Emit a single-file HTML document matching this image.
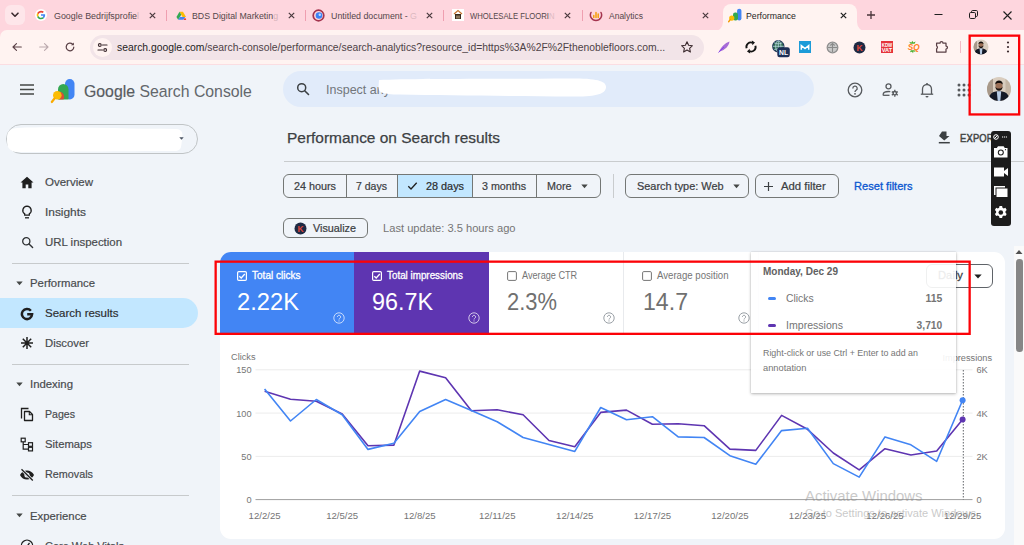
<!DOCTYPE html>
<html lang="en">
<head>
<meta charset="utf-8">
<title>Performance</title>
<style>
*{box-sizing:border-box;margin:0;padding:0}
html,body{width:1024px;height:545px;overflow:hidden;background:#f0f4f9;font-family:"Liberation Sans",Arial,sans-serif;color:#1f1f1f}
.abs,.t{position:absolute}
.t{white-space:nowrap;line-height:1;transform:translateY(-50%) scaleX(var(--sx,1));transform-origin:left center}
.r{transform-origin:right center}
#root{position:relative;width:1024px;height:545px;overflow:hidden}
/* browser chrome */
#tabs{left:0;top:0;width:1024px;height:42px;background:#fed6de}
#tool{left:0;top:30px;width:1024px;height:34.400px;background:#fff3f1;border-top-left-radius:7px}
#atab{left:723px;top:4.400px;width:134px;height:27.600px;background:#fff3f1;border-radius:8px 8px 0 0}
.tt{font-size:9.700px;color:#54464a}
.sep{width:1px;height:11px;top:10px;background:#ef9fb0}
#url{left:90px;top:35px;width:614px;height:25px;border-radius:13px;background:#f2e4e8}
/* header */
.nav,.grp{font-size:11.200px;color:#474a4d;-webkit-text-stroke:.18px #474a4d;margin-top:.9px}
.hr{height:1px;background:#c7cacc}
.btn{border:1px solid #747775;border-radius:6px;height:24px;top:174px}
.bt{font-size:11px;color:#3c4043;-webkit-text-stroke:.22px #3c4043}
.ml{font-size:10px;-webkit-text-stroke:.3px}
.mv{font-size:24.5px}
.ax{font-size:9.200px;fill:#757575;font-family:"Liberation Sans",sans-serif}
</style>
</head>
<body>
<div id="root">
<!-- TABSTRIP -->
<div id="tabs" class="abs"></div>
<div id="tool" class="abs"></div>
<div id="atab" class="abs"></div>
<svg class="abs" style="left:713px;top:22px" width="10" height="10"><path d="M10 10H0A10 10 0 0 0 10 0Z" fill="#fff3f1"/></svg>
<svg class="abs" style="left:857px;top:22px" width="10" height="10"><path d="M0 10H10A10 10 0 0 1 0 0Z" fill="#fff3f1"/></svg>
<!-- chevron btn -->
<div class="abs" style="left:5px;top:5px;width:20px;height:20px;border-radius:6px;background:#fee6ea"></div>
<svg class="abs" style="left:10px;top:11px" width="10" height="8"><path d="M2 2.2 5 5.2 8 2.2" fill="none" stroke="#3b2a2e" stroke-width="1.6" stroke-linecap="round" stroke-linejoin="round"/></svg>
<!-- tab1 -->
<svg class="abs" style="left:35px;top:9px" width="12" height="12" viewBox="0 0 48 48"><circle cx="24" cy="24" r="24" fill="#fff"/><path fill="#EA4335" d="M24 13.5c3.2 0 5.4 1.4 6.600 2.500l4.900-4.800C32.500 8.400 28.600 6.800 24 6.800 17.300 6.800 11.500 10.600 8.700 16.200l5.700 4.400C15.800 16.500 19.600 13.500 24 13.500z"/><path fill="#4285F4" d="M40.500 24.400c0-1.400-.1-2.400-.4-3.500H24v6.400h9.400c-.2 1.600-1.200 4-3.500 5.600l5.500 4.200c3.200-3 5.100-7.400 5.100-12.700z"/><path fill="#FBBC05" d="M14.400 27.400c-.4-1.100-.6-2.200-.6-3.400s.2-2.300.6-3.400l-5.700-4.400C7.500 18.600 6.800 21.200 6.800 24s.7 5.400 1.900 7.800l5.700-4.400z"/><path fill="#34A853" d="M24 41.200c4.600 0 8.500-1.500 11.400-4.100l-5.500-4.200c-1.500 1-3.400 1.700-5.900 1.700-4.400 0-8.200-3-9.600-7.100l-5.700 4.400c2.800 5.600 8.600 9.300 15.300 9.300z"/></svg>
<div class="t tt" id="tb1" style="--sx:0.918;left:54px;top:15.5px">Google Bedrijfsprofie<span style="opacity:.25">l</span></div>
<svg class="abs cx" style="left:148px;top:11px" width="9" height="9"><path d="M1.800 1.800 7.200 7.200M7.200 1.800 1.800 7.200" stroke="#4a3a3e" stroke-width="1.200"/></svg>
<div class="abs sep" style="left:166px"></div>
<!-- tab2 -->
<svg class="abs" style="left:176px;top:10.500px" width="10.500" height="9.600" viewBox="0 0 12 11"><path d="M4 1h4l3.500 6h-4z" fill="#fbbc04"/><path d="M4 1 .5 7l2 3L6 4.400z" fill="#34a853"/><path d="M2.500 10h6l2-3h-6z" fill="#4285f4"/><circle cx="10.300" cy="9.600" r="1.300" fill="#ea4335"/></svg>
<div class="t tt" id="tb2" style="--sx:0.908;left:192px;top:15.700px">BDS Digital Marketin<span style="opacity:.25">g</span></div>
<svg class="abs cx" style="left:287px;top:11px" width="9" height="9"><path d="M1.800 1.800 7.200 7.200M7.200 1.800 1.800 7.200" stroke="#4a3a3e" stroke-width="1.200"/></svg>
<div class="abs sep" style="left:305px"></div>
<!-- tab3 -->
<svg class="abs" style="left:312px;top:9px" width="13" height="13" viewBox="0 0 13 13"><circle cx="6.500" cy="6.500" r="5.300" fill="none" stroke="#a4344e" stroke-width="1.700"/><circle cx="7" cy="6.500" r="3.300" fill="#3b82f6"/><circle cx="7.800" cy="5.800" r="1.200" fill="#bfdbfe"/></svg>
<div class="t tt" id="tb3" style="--sx:0.912;left:331px;top:15.700px">Untitled document - <span style="opacity:.2">G</span></div>
<svg class="abs cx" style="left:425px;top:11px" width="9" height="9"><path d="M1.800 1.800 7.200 7.200M7.200 1.800 1.800 7.200" stroke="#4a3a3e" stroke-width="1.200"/></svg>
<div class="abs sep" style="left:443px"></div>
<!-- tab4 -->
<div class="abs" style="left:452px;top:9px;width:12px;height:12px;background:#fff"></div>
<svg class="abs" style="left:452px;top:9px" width="12" height="12" viewBox="0 0 12 12"><path d="M2 5 6 1.500 10 5" fill="none" stroke="#c87533" stroke-width="1.300"/><path d="M3 5h6v5H3z" fill="#3a2a1c"/><path d="M5 6.500v3M7 6.500v3" stroke="#f3d6b0" stroke-width=".9"/></svg>
<div class="t tt" id="tb4" style="--sx:0.797;left:470px;top:15.700px">WHOLESALE FLOORI<span style="opacity:.2">N</span></div>
<svg class="abs cx" style="left:563px;top:11px" width="9" height="9"><path d="M1.800 1.800 7.200 7.200M7.200 1.800 1.800 7.200" stroke="#4a3a3e" stroke-width="1.200"/></svg>
<div class="abs sep" style="left:582px"></div>
<!-- tab5 -->
<svg class="abs" style="left:589px;top:9px" width="14" height="13" viewBox="0 0 14 13"><path d="M2 3.500A5.600 5.600 0 1 0 12 3.500" fill="none" stroke="#a4344e" stroke-width="1.500" stroke-linecap="round"/><path d="M4.800 8.500V6.500M7 8.500V3.500M9.200 8.500V5" stroke="#f59e0b" stroke-width="1.500" stroke-linecap="round"/></svg>
<div class="t tt" id="tb5" style="--sx:0.877;left:609px;top:15.700px">Analytics</div>
<svg class="abs cx" style="left:701px;top:11px" width="9" height="9"><path d="M1.800 1.800 7.200 7.200M7.200 1.800 1.800 7.200" stroke="#4a3a3e" stroke-width="1.200"/></svg>
<!-- active tab -->
<svg class="abs" style="left:728px;top:7.500px" width="15" height="15" viewBox="0 0 24 24"><rect x="14.500" y="1" width="7" height="19" rx="3.500" fill="#4285f4"/><rect x="8" y="7" width="8" height="13" rx="3.500" fill="#34a853"/><path d="M8 20h6V9.500A6 6 0 0 0 8 14z" fill="#ea4335" opacity=".0"/><circle cx="6" cy="16" r="4.200" fill="#fbbc04"/><path d="M3.500 18.500 1 22" stroke="#f29900" stroke-width="2.200" stroke-linecap="round"/></svg>
<div class="t tt" id="tb6" style="--sx:0.901;left:746px;top:15.700px;color:#1f1f1f">Performance</div>
<svg class="abs cx" style="left:839px;top:11px" width="9" height="9"><path d="M1.800 1.800 7.200 7.200M7.200 1.800 1.800 7.200" stroke="#1f1f1f" stroke-width="1.200"/></svg>
<svg class="abs" style="left:866px;top:10px" width="10" height="10"><path d="M5 1v8M1 5h8" stroke="#4a353a" stroke-width="1.300"/></svg>
<!-- window ctl -->
<svg class="abs" style="left:933px;top:9px" width="12" height="12"><path d="M1.500 5.500h8" stroke="#1f1f1f" stroke-width="1"/></svg>
<svg class="abs" style="left:968px;top:9px" width="12" height="12"><rect x="1.500" y="3.500" width="6" height="6" rx="1.200" fill="none" stroke="#1f1f1f" stroke-width="1"/><path d="M3.500 3.500V2.700A1.200 1.200 0 0 1 4.700 1.500H8.300A1.200 1.200 0 0 1 9.500 2.700V6.300A1.200 1.200 0 0 1 8.300 7.500H7.500" fill="none" stroke="#1f1f1f" stroke-width="1"/></svg>
<svg class="abs" style="left:1001px;top:9px" width="13" height="13"><path d="M2.500 2.500 10.500 10.500M10.500 2.500 2.500 10.500" stroke="#1f1f1f" stroke-width="1.100"/></svg>
<!-- TOOLBAR -->
<svg class="abs" style="left:10.500px;top:41px" width="12" height="12"><path d="M10.300 6H2.200M5.500 2.600 2 6 5.500 9.400" fill="none" stroke="#5a4046" stroke-width="1.150" stroke-linecap="round" stroke-linejoin="round"/></svg>
<svg class="abs" style="left:37.500px;top:41px" width="12" height="12"><path d="M1.700 6H9.800M6.500 2.600 10 6 6.500 9.400" fill="none" stroke="#bba9ad" stroke-width="1.150" stroke-linecap="round" stroke-linejoin="round"/></svg>
<svg class="abs" style="left:64px;top:41px" width="12" height="12"><path d="M9.800 6A3.800 3.800 0 1 1 8.600 3.200" fill="none" stroke="#5a4046" stroke-width="1.200" stroke-linecap="round"/><path d="M9.900 1.500v2.800H7.100z" fill="#5a4046"/></svg>
<div id="url" class="abs"></div>
<div class="abs" style="left:93px;top:38px;width:19px;height:19px;border-radius:10px;background:#fff3f1"></div>
<svg class="abs" style="left:97px;top:42px" width="11" height="11"><circle cx="2.800" cy="3" r="1.400" fill="none" stroke="#3b2a2e" stroke-width="1.100"/><path d="M5.500 3h4.500" stroke="#3b2a2e" stroke-width="1.200" stroke-linecap="round"/><circle cx="8.200" cy="8" r="1.400" fill="none" stroke="#3b2a2e" stroke-width="1.100"/><path d="M1 8h4.500" stroke="#3b2a2e" stroke-width="1.200" stroke-linecap="round"/></svg>
<div class="t" id="urlt" style="--sx:0.959;left:117px;top:47px;font-size:10.800px;color:#1f1f1f">search.google.com<span style="color:#4d4246">/search-console/performance/search-analytics?resource_id=https%3A%2F%2Fthenoblefloors.com...</span></div>
<svg class="abs" style="left:680px;top:40px" width="14" height="14" viewBox="0 0 14 14"><path d="M7 1.800 8.600 5.300 12.400 5.700 9.600 8.300 10.400 12 7 10.100 3.600 12 4.400 8.300 1.600 5.700 5.400 5.300Z" fill="none" stroke="#3b2a2e" stroke-width="1.100" stroke-linejoin="round"/></svg>
<!-- ext icons -->
<svg class="abs" style="left:717px;top:40px" width="14" height="14"><path d="M1.500 12.500C4 7 8 3 12.500 1.500 12 6 8 10 3 11.500Z" fill="#a66bd6"/><path d="M1.500 12.500 7 7" stroke="#7c3aed" stroke-width=".8"/></svg>
<svg class="abs" style="left:744px;top:40px" width="14" height="14"><path d="M2.600 8.300A4.500 4.500 0 0 1 8.600 2.800" fill="none" stroke="#141414" stroke-width="1.900"/><path d="M11.400 5.700A4.500 4.500 0 0 1 5.400 11.200" fill="none" stroke="#141414" stroke-width="1.900"/><path d="M7.800 .600 11 2.600 8.400 5.200z" fill="#141414"/><path d="M6.200 13.400 3 11.400 5.600 8.800z" fill="#141414"/></svg>
<svg class="abs" style="left:771px;top:39px" width="20" height="20"><circle cx="7.300" cy="7.300" r="5.600" fill="#2f6b4f" stroke="#1f3557" stroke-width="1.200"/><path d="M1.700 7.300h11.200M7.300 1.700v11.200M3.200 3.800c2.600 1.400 5.600 1.400 8.200 0M3.200 10.800c2.600-1.400 5.600-1.400 8.200 0" stroke="#c9e2f0" stroke-width=".7" fill="none"/><ellipse cx="7.300" cy="7.300" rx="2.600" ry="5.600" fill="none" stroke="#c9e2f0" stroke-width=".7"/><rect x="6.300" y="8.200" width="12.500" height="10" rx="2.300" fill="#1d2f57"/><text x="12.550" y="16" font-size="6.800" font-weight="bold" fill="#fff" text-anchor="middle" font-family="Liberation Sans,sans-serif">NL</text></svg>
<div class="abs" style="left:799px;top:41px;width:12px;height:12px;background:#1d9bd8"></div>
<svg class="abs" style="left:799px;top:41px" width="12" height="12"><path d="M2.300 8.800V4.500L6 7.500 9.700 4.500V8.800" fill="none" stroke="#fff" stroke-width="1.500"/></svg>
<svg class="abs" style="left:826px;top:41px" width="13" height="13"><circle cx="6.500" cy="6.500" r="5.300" fill="#c9c9c9" stroke="#8f8f8f" stroke-width="1.300"/><path d="M6.500 2v9M4.300 4.500 6.500 2.500 8.700 4.500M2 6.500h9" stroke="#8a8a8a" stroke-width="1.100" fill="none"/></svg>
<svg class="abs" style="left:853px;top:41px" width="13" height="13"><circle cx="6.500" cy="6.500" r="6" fill="#1e2a44"/><text x="6.500" y="9.600" font-size="8.500" font-weight="bold" fill="#e0473b" text-anchor="middle" font-family="Liberation Sans,sans-serif">K</text></svg>
<div class="abs" style="left:880.500px;top:41px;width:12.500px;height:12px;background:#e5333b"></div>
<svg class="abs" style="left:881px;top:41px" width="12" height="12"><text x="6" y="5.600" font-size="5.400" font-weight="bold" fill="#fff" text-anchor="middle" textLength="10.500" lengthAdjust="spacingAndGlyphs" font-family="Liberation Sans,sans-serif">KDW</text><text x="6" y="10.800" font-size="5.400" font-weight="bold" fill="#fff" text-anchor="middle" textLength="10.500" lengthAdjust="spacingAndGlyphs" font-family="Liberation Sans,sans-serif">VAT</text></svg>
<svg class="abs" style="left:905px;top:40px" width="17" height="14"><path d="M5.500 3.800 4.200 1.800 6.500 2.500 7.300 .8 8.300 2.600 10.600 1.500 9.600 3.800z" fill="#4caf2f"/><path d="M5.800 10.300 5 12.300 7 11.700 8 13.200 8.600 11.300 10.500 12 9.500 10.200z" fill="#4caf2f"/><text x="8.700" y="10" font-size="8.200" font-weight="bold" font-style="italic" fill="#ff7d1a" text-anchor="middle" font-family="Liberation Sans,sans-serif">SQ</text></svg>
<svg class="abs" style="left:934px;top:39px" width="16" height="16" viewBox="0 0 16 16"><path d="M2.600 4.200h3.400a1.500 1.500 0 0 1 3 0H12v2.900a1.450 1.450 0 0 1 0 2.900v3H2.600v-3.300a1.500 1.500 0 0 0 0-2.700z" fill="none" stroke="#5a4046" stroke-width="1.250" stroke-linejoin="round"/></svg>
<div class="abs" style="left:960px;top:41px;width:1px;height:12px;background:#f3b9c4"></div>
<svg class="abs" style="left:973px;top:39px" width="16" height="16"><defs><clipPath id="av1"><circle cx="8" cy="8" r="7.500"/></clipPath></defs><g clip-path="url(#av1)"><rect width="16" height="16" fill="#d9cdbf"/><rect width="4" height="16" fill="#a8998a"/><ellipse cx="8" cy="5.800" rx="2.300" ry="2.900" fill="#9b6f56"/><path d="M5.500 5.300c-.2-3.700 5.200-3.700 5 0-.6-1.500-4.400-1.500-5 0z" fill="#120d0b"/><path d="M5.600 6.100c.2 1.200 1.100 1.700 2.400 1.700s2.200-.5 2.400-1.700c.4 4.200-5.200 4.200-4.800 0z" fill="#1a1310"/><path d="M1 16c0-5 3-6.500 7-6.500s7 1.500 7 6.500z" fill="#141926"/><path d="M6.600 9.600h2.800L8.800 16H7.200z" fill="#b7cbe4"/></g></svg>
<svg class="abs" style="left:1005px;top:40px" width="6" height="14"><circle cx="3" cy="2.500" r="1.100" fill="#3b2a2e"/><circle cx="3" cy="7" r="1.100" fill="#3b2a2e"/><circle cx="3" cy="11.500" r="1.100" fill="#3b2a2e"/></svg>
<div class="abs" style="left:0;top:63.600px;width:1024px;height:.8px;background:#fbdde2"></div>
<!-- PAGE -->
<svg class="abs" style="left:20px;top:84px" width="14" height="11"><path d="M0 1h14M0 5.500h14M0 10h14" stroke="#444746" stroke-width="1.400"/></svg>
<svg class="abs" style="left:50px;top:77px" width="27" height="27" viewBox="0 0 27 27"><rect x="15" y="2" width="9.500" height="20.500" rx="4.700" fill="#4285f4"/><path d="M8 22.500h10.500V12.200a5.250 5.250 0 0 0-10.500 0z" fill="#34a853"/><path d="M9 22.500h4.500a5.500 5.500 0 0 0-4.500-8z" fill="#ea4335" opacity=".9"/><circle cx="7.300" cy="18.300" r="4.300" fill="#fbbc04"/><path d="M4.500 21.500 1.800 25" stroke="#f9ab00" stroke-width="2.200" stroke-linecap="round"/></svg>
<div class="t" id="gsc" style="--sx:0.920;left:84px;top:92px;font-size:17.200px;color:#63676c"><span style="color:#585c61;-webkit-text-stroke:.2px #585c61">Google</span> Search Console</div>
<div class="abs" style="left:283px;top:71px;width:531px;height:36px;border-radius:18px;background:#e1ebfa"></div>
<svg class="abs" style="left:296px;top:82px" width="14" height="14"><circle cx="5.700" cy="5.700" r="4" fill="none" stroke="#3c4043" stroke-width="1.500"/><path d="M8.700 8.700 12.500 12.500" stroke="#3c4043" stroke-width="1.600" stroke-linecap="round"/></svg>
<div class="t" id="insp" style="left:326px;top:89.500px;font-size:12.500px;color:#72767b">Inspect any URL</div>
<svg class="abs" style="left:370px;top:74px" width="245" height="28"><path d="M9 6C40 4.500 120 5 200 4.500 230 4 236.500 8 236 13.500 235.500 20 226 23 200 22.500 150 22 80 21.500 30 20.500 11 20.500 8.500 18 8.500 13Z" fill="#fff"/></svg>
<!-- header icons -->
<svg class="abs" style="left:846.500px;top:81.500px" width="16" height="16"><circle cx="8" cy="8" r="6.800" fill="none" stroke="#575a5e" stroke-width="1.300"/><path d="M5.800 6.400a2.200 2.200 0 1 1 3.300 1.900c-.8.500-1.100.9-1.100 1.700" fill="none" stroke="#575a5e" stroke-width="1.300"/><circle cx="8" cy="11.800" r=".9" fill="#575a5e"/></svg>
<svg class="abs" style="left:881.500px;top:81.500px" width="18" height="16"><circle cx="6.500" cy="4.300" r="2.500" fill="none" stroke="#575a5e" stroke-width="1.300"/><path d="M1.200 13.500v-1c0-2 2.800-3 5.300-3 .6 0 1.200.1 1.800.2" fill="none" stroke="#575a5e" stroke-width="1.300"/><path d="M1.200 13.300h6.300" stroke="#575a5e" stroke-width="1.300"/><circle cx="12.800" cy="11.300" r="1.700" fill="none" stroke="#575a5e" stroke-width="1.500"/><path d="M12.800 7.800v1.500M12.800 13.300v1.500M9.800 9.600l1.300.8M14.500 12.300l1.300.8M9.800 13.100l1.300-.8M14.500 10.400l1.300-.8" stroke="#575a5e" stroke-width="1.300"/></svg>
<svg class="abs" style="left:918.500px;top:80.500px" width="16" height="18"><path d="M3.500 13V8a4.500 4.500 0 0 1 9 0v5" fill="none" stroke="#575a5e" stroke-width="1.300"/><path d="M1.800 13.200h12.400" stroke="#575a5e" stroke-width="1.300"/><path d="M8 3.500V2" stroke="#575a5e" stroke-width="1.500"/><path d="M6.500 15h3a1.500 1.500 0 0 1-3 0z" fill="#575a5e"/></svg>
<svg class="abs" style="left:956.500px;top:82.500px" width="14" height="14" fill="#575a5e"><circle cx="2" cy="2" r="1.500"/><circle cx="7" cy="2" r="1.500"/><circle cx="12" cy="2" r="1.500"/><circle cx="2" cy="7" r="1.500"/><circle cx="7" cy="7" r="1.500"/><circle cx="12" cy="7" r="1.500"/><circle cx="2" cy="12" r="1.500"/><circle cx="7" cy="12" r="1.500"/><circle cx="12" cy="12" r="1.500"/></svg>
<svg class="abs" style="left:987px;top:77px" width="24" height="24"><defs><clipPath id="av2"><circle cx="12" cy="12" r="12"/></clipPath></defs><g clip-path="url(#av2)"><rect width="24" height="24" fill="#d9cdbf"/><rect width="6" height="24" fill="#a8998a"/><rect x="18.500" width="6" height="24" fill="#c4b5a4"/><ellipse cx="12" cy="8.600" rx="3.500" ry="4.400" fill="#9b6f56"/><path d="M8.200 7.800c-.3-5.600 7.900-5.600 7.600 0-.9-2.300-6.700-2.300-7.600 0z" fill="#120d0b"/><path d="M8.400 9c.3 1.800 1.600 2.600 3.600 2.600s3.300-.8 3.600-2.600c.6 6.300-7.800 6.300-7.200 0z" fill="#1a1310"/><path d="M1.500 24c0-7.500 4.500-9.800 10.500-9.800s10.500 2.300 10.500 9.800z" fill="#141926"/><path d="M9.800 14.300h4.400L13.300 24h-2.600z" fill="#b7cbe4"/></g></svg>
<!-- SIDEBAR -->
<div class="abs" style="left:6px;top:124px;width:192px;height:30px;border-radius:15px;border:1px solid #c0c4c6"></div>
<svg class="abs" style="left:6px;top:124px" width="186" height="30"><path d="M12 4C50 2 120 5 170 5 177 5 177 10 176 16 175 22 176 26 170 27 120 27 50 28 12 28 2 28 1 22 1 15 1 8 3 4 12 4Z" fill="#fff"/></svg>
<svg class="abs" style="left:179px;top:136.500px" width="5" height="3"><path d="M.3.300h4.400L2.500 2.800z" fill="#4b5563"/></svg>
<!-- nav -->
<svg class="abs" style="left:20px;top:176px" width="14" height="13"><path d="M7 .8.500 6.600h1.900v5.600h3.300V8.400h2.600v3.800h3.300V6.600h1.900z" fill="#1f1f1f"/></svg>
<div class="t nav" id="n1" style="--sx:1.029;left:45px;top:182.500px">Overview</div>
<svg class="abs" style="left:21px;top:205px" width="12" height="15"><path d="M6 1.200a4.200 4.200 0 0 0-2.300 7.700v1.300h4.600V8.900A4.200 4.200 0 0 0 6 1.200z" fill="none" stroke="#1f1f1f" stroke-width="1.300"/><path d="M4 12.800h4" stroke="#1f1f1f" stroke-width="1.300"/></svg>
<div class="t nav" id="n2" style="--sx:1.063;left:45px;top:212.500px">Insights</div>
<svg class="abs" style="left:20.500px;top:236px" width="14" height="14"><circle cx="5.300" cy="5.300" r="3.600" fill="none" stroke="#2e3033" stroke-width="1.300"/><path d="M8 8 11.600 11.600" stroke="#2e3033" stroke-width="1.400" stroke-linecap="round"/></svg>
<div class="t nav" id="n3" style="--sx:1.021;left:45px;top:242.500px">URL inspection</div>
<div class="abs hr" style="left:12px;top:263px;width:177px"></div>
<svg class="abs" style="left:16px;top:281px" width="7" height="5"><path d="M.3.500h6.400L3.500 4.300z" fill="#444746"/></svg>
<div class="t grp" id="g1" style="--sx:1.015;left:30px;top:283.500px">Performance</div>
<div class="abs" style="left:0;top:298px;width:198px;height:30px;border-radius:0 15px 15px 0;background:#c2e7ff"></div>
<svg class="abs" style="left:20px;top:306.500px" width="14" height="14"><path d="M10.900 3.700A5.100 5.100 0 1 0 12.100 7.300H7.200" fill="none" stroke="#1f1f1f" stroke-width="2.500"/></svg>
<div class="t nav" id="n4" style="--sx:1.028;left:45px;top:313.500px;color:#1f1f1f">Search results</div>
<svg class="abs" style="left:20px;top:336px" width="14" height="14"><path d="M7 1v12M1 7h12M2.800 2.800l8.400 8.400M2.800 11.200l8.400-8.400" stroke="#1f1f1f" stroke-width="1.500"/></svg>
<div class="t nav" id="n5" style="--sx:1.011;left:45px;top:343.500px">Discover</div>
<div class="abs hr" style="left:12px;top:364px;width:177px"></div>
<svg class="abs" style="left:16px;top:382px" width="7" height="5"><path d="M.3.500h6.400L3.500 4.300z" fill="#444746"/></svg>
<div class="t grp" id="g2" style="--sx:1.016;left:30px;top:384.500px">Indexing</div>
<svg class="abs" style="left:20px;top:407px" width="14" height="15"><path d="M1.500 11.500V1.500h7" fill="none" stroke="#1f1f1f" stroke-width="1.300"/><path d="M4.500 4.500h5l3 3v6h-8z" fill="none" stroke="#1f1f1f" stroke-width="1.300" stroke-linejoin="round"/><path d="M9.300 4.700v3h3" fill="none" stroke="#1f1f1f" stroke-width="1.100"/></svg>
<div class="t nav" id="n6" style="--sx:0.945;left:45px;top:414.500px">Pages</div>
<svg class="abs" style="left:20px;top:437px" width="14" height="15"><rect x="1.200" y="1.200" width="4" height="3.600" fill="none" stroke="#1f1f1f" stroke-width="1.200"/><rect x="8.500" y="5.700" width="4" height="3.600" fill="none" stroke="#1f1f1f" stroke-width="1.200"/><rect x="8.500" y="10.300" width="4" height="3.600" fill="none" stroke="#1f1f1f" stroke-width="1.200"/><path d="M3.200 5v7.100h5.300M3.200 7.500h5.300" fill="none" stroke="#1f1f1f" stroke-width="1.200"/></svg>
<div class="t nav" id="n7" style="--sx:1.008;left:45px;top:444.500px">Sitemaps</div>
<svg class="abs" style="left:19px;top:468px" width="16" height="14"><path d="M1 7c1.500-3 4-4.500 7-4.500S13.500 4 15 7c-1.500 3-4 4.500-7 4.500S2.500 10 1 7z" fill="#1f1f1f"/><circle cx="8" cy="7" r="2.600" fill="#f0f4f9"/><circle cx="8" cy="7" r="1.300" fill="#1f1f1f"/><path d="M2.500 1.200 13.800 12.500" stroke="#f0f4f9" stroke-width="2.800"/><path d="M2.500 1.200 13.800 12.500" stroke="#1f1f1f" stroke-width="1.300"/></svg>
<div class="t nav" id="n8" style="--sx:0.965;left:45px;top:474.500px">Removals</div>
<div class="abs hr" style="left:12px;top:495px;width:177px"></div>
<svg class="abs" style="left:16px;top:513px" width="7" height="5"><path d="M.3.500h6.400L3.500 4.300z" fill="#444746"/></svg>
<div class="t grp" id="g3" style="--sx:1.011;left:30px;top:515.900px">Experience</div>
<svg class="abs" style="left:20px;top:539px" width="14" height="14"><path d="M2.500 10A5.600 5.600 0 1 1 11.500 10" fill="none" stroke="#1f1f1f" stroke-width="1.300"/><path d="M7 7.500 9.500 4" stroke="#1f1f1f" stroke-width="1.300"/></svg>
<div class="t nav" id="n9" style="--sx:0.982;left:45px;top:545.900px">Core Web Vitals</div>
<!-- MAIN -->
<div class="t" id="ttl" style="--sx:0.997;left:287px;top:138px;font-size:15.500px;color:#3c4043;-webkit-text-stroke:.25px #3c4043">Performance on Search results</div>
<svg class="abs" style="left:938px;top:131px" width="13" height="13"><path d="M4 .500h4.500v4.500h3L6.250 9.500 1 5z" fill="#3c4043"/><path d="M.800 11.700h11" stroke="#3c4043" stroke-width="1.500"/></svg>
<div class="t" id="exp" style="--sx:0.870;left:959.500px;top:137.500px;font-size:10.800px;color:#444746;letter-spacing:.2px;-webkit-text-stroke:.5px #444746">EXPORT</div>
<div class="abs hr" style="left:284px;top:161px;width:740px;background:#c9ccce"></div>
<!-- segmented -->
<div class="abs btn" style="left:283px;width:318px"></div>
<div class="abs" style="left:397px;top:175px;width:76px;height:22px;background:#c2e7ff"></div>
<div class="abs" style="left:346px;top:175px;width:1px;height:22px;background:#747775"></div>
<div class="abs" style="left:397px;top:175px;width:1px;height:22px;background:#747775"></div>
<div class="abs" style="left:472px;top:175px;width:1px;height:22px;background:#747775"></div>
<div class="abs" style="left:536px;top:175px;width:1px;height:22px;background:#747775"></div>
<div class="t bt" id="b1" style="--sx:0.981;left:294px;top:186px">24 hours</div>
<div class="t bt" id="b2" style="--sx:0.956;left:356px;top:186px">7 days</div>
<svg class="abs" style="left:407px;top:181px" width="11" height="10"><path d="M1.300 5.300 4 8 9.700 1.800" fill="none" stroke="#1f1f1f" stroke-width="1.300"/></svg>
<div class="t bt" id="b3" style="--sx:0.986;left:425.500px;top:186px;color:#1f1f1f">28 days</div>
<div class="t bt" id="b4" style="--sx:0.972;left:482px;top:186px">3 months</div>
<div class="t bt" id="b5" style="--sx:0.978;left:546.500px;top:186px">More</div>
<svg class="abs" style="left:581px;top:184px" width="7" height="5"><path d="M.3.500h6.400L3.500 4.300z" fill="#444746"/></svg>
<div class="abs" style="left:613px;top:174px;width:1px;height:24px;background:#c9ccce"></div>
<div class="abs btn" style="left:625px;width:124px"></div>
<div class="t bt" id="b6" style="--sx:0.992;left:637px;top:186px">Search type: Web</div>
<svg class="abs" style="left:733px;top:184px" width="7" height="5"><path d="M.3.500h6.400L3.500 4.300z" fill="#444746"/></svg>
<div class="abs btn" style="left:755px;width:84px"></div>
<svg class="abs" style="left:763px;top:181px" width="11" height="11"><path d="M5.500 1v9M1 5.500h9" stroke="#3c4043" stroke-width="1.200"/></svg>
<div class="t bt" id="b7" style="--sx:1.029;left:781px;top:186px">Add filter</div>
<div class="t bt" id="b8" style="--sx:1.009;left:854px;top:186px;color:#0b57d0;-webkit-text-stroke:.3px #0b57d0">Reset filters</div>
<!-- visualize -->
<div class="abs" style="left:283px;top:218px;width:85px;height:20px;border:1px solid #747775;border-radius:6px"></div>
<svg class="abs" style="left:294px;top:222px" width="13" height="13"><circle cx="6.500" cy="6.500" r="6" fill="#1e2a44"/><text x="6.500" y="9.500" font-size="8.500" font-weight="bold" fill="#e0473b" text-anchor="middle" font-family="Liberation Sans,sans-serif">K</text></svg>
<div class="t bt" id="b9" style="--sx:0.981;left:313px;top:228px">Visualize</div>
<div class="t" id="lu" style="--sx:1.004;left:382.500px;top:228.800px;font-size:11.100px;color:#757575">Last update: 3.5 hours ago</div>
<!-- CARD -->
<div class="abs" style="left:219.500px;top:252px;width:785px;height:287px;background:#fff;border-radius:11px;overflow:hidden">
<div class="abs" style="left:0;top:0;width:134.500px;height:81px;background:#4285f4"></div>
<div class="abs" style="left:134.500px;top:0;width:135px;height:81px;background:#5e35b1"></div>
<div class="abs" style="left:403.500px;top:0;width:1px;height:81px;background:#e8eaed"></div>
<div class="abs" style="left:538px;top:0;width:1px;height:81px;background:#e8eaed"></div>
</div>
<!-- metric 1 -->
<svg class="abs" style="left:237px;top:271px" width="10" height="10"><rect x=".600" y=".600" width="8.800" height="8.800" rx="1.200" fill="none" stroke="#fff" stroke-width="1.200"/><path d="M2.300 5.200 4.200 7 7.800 3" fill="none" stroke="#fff" stroke-width="1.300"/></svg>
<div class="t ml" id="m1" style="--sx:1.003;left:252px;top:276.200px;color:#fff">Total clicks</div>
<div class="t mv" id="v1" style="--sx:0.968;left:237px;top:302px;color:#fff">2.22K</div>
<svg class="abs hq" style="left:332.5px;top:312.200px" width="12" height="12"><circle cx="6" cy="6" r="5.200" fill="none" stroke="#fff" stroke-opacity=".7" stroke-width="1"/><path d="M4.400 4.900a1.600 1.600 0 1 1 2.400 1.400c-.6.400-.8.700-.8 1.200" fill="none" stroke="#fff" stroke-opacity=".7" stroke-width="1"/><circle cx="6" cy="8.900" r=".6" fill="#fff" fill-opacity=".7"/></svg>
<!-- metric 2 -->
<svg class="abs" style="left:372px;top:271px" width="10" height="10"><rect x=".600" y=".600" width="8.800" height="8.800" rx="1.200" fill="none" stroke="#fff" stroke-width="1.200"/><path d="M2.300 5.200 4.200 7 7.800 3" fill="none" stroke="#fff" stroke-width="1.300"/></svg>
<div class="t ml" id="m2" style="--sx:0.984;left:387px;top:276.200px;color:#fff">Total impressions</div>
<div class="t mv" id="v2" style="--sx:0.953;left:372px;top:302px;color:#fff">96.7K</div>
<svg class="abs hq" style="left:467.5px;top:312.200px" width="12" height="12"><circle cx="6" cy="6" r="5.200" fill="none" stroke="#fff" stroke-opacity=".7" stroke-width="1"/><path d="M4.400 4.900a1.600 1.600 0 1 1 2.400 1.400c-.6.400-.8.700-.8 1.200" fill="none" stroke="#fff" stroke-opacity=".7" stroke-width="1"/><circle cx="6" cy="8.900" r=".6" fill="#fff" fill-opacity=".7"/></svg>
<!-- metric 3 -->
<svg class="abs" style="left:507px;top:271px" width="10" height="10"><rect x=".600" y=".600" width="8.800" height="8.800" rx="1.200" fill="none" stroke="#757575" stroke-width="1"/></svg>
<div class="t ml" id="m3" style="--sx:0.914;left:521.500px;top:276.200px;color:#757575;-webkit-text-stroke:0">Average CTR</div>
<div class="t mv" id="v3" style="--sx:0.895;left:507px;top:302px;color:#707070">2.3%</div>
<svg class="abs hq" style="left:602.5px;top:312.200px" width="12" height="12"><circle cx="6" cy="6" r="5.200" fill="none" stroke="#9aa0a6" stroke-width="1"/><path d="M4.400 4.900a1.600 1.600 0 1 1 2.400 1.400c-.6.400-.8.700-.8 1.200" fill="none" stroke="#9aa0a6" stroke-width="1"/><circle cx="6" cy="8.900" r=".6" fill="#9aa0a6"/></svg>
<!-- metric 4 -->
<svg class="abs" style="left:642px;top:271px" width="10" height="10"><rect x=".600" y=".600" width="8.800" height="8.800" rx="1.200" fill="none" stroke="#757575" stroke-width="1"/></svg>
<div class="t ml" id="m4" style="--sx:0.962;left:657px;top:276.200px;color:#757575;-webkit-text-stroke:0">Average position</div>
<div class="t mv" id="v4" style="--sx:0.944;left:643px;top:302px;color:#707070">14.7</div>
<svg class="abs hq" style="left:737.5px;top:312.200px" width="12" height="12"><circle cx="6" cy="6" r="5.200" fill="none" stroke="#9aa0a6" stroke-width="1"/><path d="M4.400 4.900a1.600 1.600 0 1 1 2.400 1.400c-.6.400-.8.700-.8 1.200" fill="none" stroke="#9aa0a6" stroke-width="1"/><circle cx="6" cy="8.900" r=".6" fill="#9aa0a6"/></svg>
<!-- daily dropdown -->
<div class="abs" style="left:926px;top:264px;width:67px;height:24px;border:1px solid #5f6368;border-radius:6px"></div>
<div class="t" id="dly" style="--sx:0.978;left:938px;top:276px;font-size:11.500px;color:#3c4043;-webkit-text-stroke:.3px #3c4043">Daily</div>
<svg class="abs" style="left:974px;top:274px" width="8" height="5"><path d="M.3.500h7.400L4 4.500z" fill="#1f1f1f"/></svg>
<!-- chart -->
<svg class="abs" style="left:0;top:0" width="1024" height="545" viewBox="0 0 1024 545">
<path d="M255.500 369.800H972.500M255.500 413.100H972.500M255.500 456.400H972.500" stroke="#ececec" stroke-width="1"/>
<path d="M255.500 499.600H972.500" stroke="#9e9e9e" stroke-width="1"/>
<text class="ax" x="231" y="360.300">Clicks</text>
<text class="ax" x="251.500" y="373.300" text-anchor="end">150</text>
<text class="ax" x="251.500" y="416.600" text-anchor="end">100</text>
<text class="ax" x="251.500" y="459.900" text-anchor="end">50</text>
<text class="ax" x="251.500" y="503.100" text-anchor="end">0</text>
<text class="ax" x="992" y="360.500" text-anchor="end">Impressions</text>
<text class="ax" x="976.500" y="373.300">6K</text>
<text class="ax" x="976.500" y="416.600">4K</text>
<text class="ax" x="976.500" y="459.900">2K</text>
<text class="ax" x="976.500" y="503.100">0</text>
<text class="ax" style="font-size:9.600px" x="264.6" y="518.600" text-anchor="middle">12/2/25</text><text class="ax" style="font-size:9.600px" x="342.2" y="518.600" text-anchor="middle">12/5/25</text><text class="ax" style="font-size:9.600px" x="419.7" y="518.600" text-anchor="middle">12/8/25</text><text class="ax" style="font-size:9.600px" x="497.2" y="518.600" text-anchor="middle">12/11/25</text><text class="ax" style="font-size:9.600px" x="574.8" y="518.600" text-anchor="middle">12/14/25</text><text class="ax" style="font-size:9.600px" x="652.4" y="518.600" text-anchor="middle">12/17/25</text><text class="ax" style="font-size:9.600px" x="729.9" y="518.600" text-anchor="middle">12/20/25</text><text class="ax" style="font-size:9.600px" x="807.5" y="518.600" text-anchor="middle">12/23/25</text><text class="ax" style="font-size:9.600px" x="885.0" y="518.600" text-anchor="middle">12/26/25</text><text class="ax" style="font-size:9.600px" x="962.6" y="518.600" text-anchor="middle">12/29/25</text>
<path d="M963.300 370V499.500" stroke="#5f6368" stroke-width="1" stroke-dasharray="1.500 1.500"/>
<polyline points="264.6,391.3 290.5,399.2 316.3,401.2 342.2,414.0 368.0,445.8 393.9,445.1 419.7,371.1 445.6,377.7 471.4,410.8 497.2,409.8 523.1,414.8 549.0,440.5 574.8,446.8 600.7,412.4 626.5,410.1 652.4,424.3 678.2,423.7 704.1,425.7 729.9,449.1 755.8,450.4 781.6,415.4 807.5,429.3 833.3,453.0 859.2,469.9 885.0,448.7 910.9,455.0 936.7,451.0 962.6,419.5" fill="none" stroke="#5e35b1" stroke-width="1.600" stroke-linejoin="round"/>
<polyline points="264.6,389.0 290.5,421.0 316.3,399.5 342.2,414.7 368.0,449.4 393.9,443.2 419.7,411.4 445.6,399.5 471.4,410.5 497.2,421.7 523.1,437.5 549.0,444.5 574.8,451.4 600.7,407.5 626.5,419.7 652.4,416.7 678.2,436.9 704.1,437.5 729.9,455.7 755.8,464.3 781.6,430.6 807.5,428.3 833.3,463.6 859.2,477.1 885.0,436.9 910.9,444.8 936.7,461.3 962.6,400.3" fill="none" stroke="#4285f4" stroke-width="1.600" stroke-linejoin="round"/>
<circle cx="962.600" cy="400.300" r="3" fill="#4285f4"/>
<circle cx="962.600" cy="419.500" r="3" fill="#5e35b1"/>
</svg>
<!-- OVERLAYS -->
<!-- scrollbar -->
<div class="abs" style="left:1014px;top:246px;width:10px;height:299px;background:#fafafa"></div>
<svg class="abs" style="left:1015px;top:249px" width="8" height="6"><path d="M4 1 7.500 5H.500z" fill="#505050"/></svg>
<div class="abs" style="left:1016px;top:259px;width:6.500px;height:93px;border-radius:3.200px;background:#868686"></div>
<!-- watermark -->
<div class="t" id="wm1" style="--sx:0.993;left:805px;top:495.200px;font-size:15px;color:#8a8a8a;opacity:.45">Activate Windows</div>
<div class="t" id="wm2" style="--sx:1.002;left:805px;top:512.900px;font-size:11px;color:#8a8a8a;opacity:.45">Go to Settings to activate Windows.</div>
<!-- tooltip -->
<div class="abs" style="left:750.500px;top:252px;width:205.500px;height:140.500px;background:rgba(255,255,255,.9);box-shadow:0 1px 3px rgba(0,0,0,.28),0 0 1px rgba(0,0,0,.2)"></div>
<div class="t" id="tp1" style="--sx:0.887;left:762.500px;top:271.500px;font-size:11.300px;font-weight:bold;color:#616161">Monday, Dec 29</div>
<div class="abs" style="left:768px;top:296.500px;width:8px;height:3px;border-radius:1.500px;background:#4285f4"></div>
<div class="t" id="tp2" style="--sx:0.920;left:786px;top:298.500px;font-size:11.300px;color:#757575">Clicks</div>
<div class="t r" id="tp3" style="--sx:0.921;right:81.500px;top:298.500px;font-size:11.300px;font-weight:bold;color:#757575">115</div>
<div class="abs" style="left:768px;top:323.500px;width:8px;height:3px;border-radius:1.500px;background:#5e35b1"></div>
<div class="t" id="tp4" style="--sx:0.936;left:786px;top:325.500px;font-size:11.300px;color:#757575">Impressions</div>
<div class="t r" id="tp5" style="--sx:0.909;right:81.500px;top:325.500px;font-size:11.300px;font-weight:bold;color:#757575">3,710</div>
<div class="t" id="tp6" style="--sx:0.905;left:762.500px;top:353px;font-size:9.800px;color:#757575">Right-click or use Ctrl + Enter to add an</div>
<div class="t" id="tp7" style="--sx:0.948;left:762.500px;top:368px;font-size:9.800px;color:#757575">annotation</div>
<!-- red annotation boxes -->
<svg class="abs" style="left:0;top:0;pointer-events:none" width="1024" height="545"><rect x="215.650" y="261.650" width="754" height="72.200" fill="none" stroke="#fc0207" stroke-width="2.300"/><rect x="969.650" y="35.650" width="49.500" height="78.800" fill="none" stroke="#fc0207" stroke-width="2.300"/></svg>
<!-- black capture widget -->
<div class="abs" style="left:991px;top:131px;width:19.500px;height:94.500px;border-radius:3px;background:#1c1c1c"></div>
<svg class="abs" style="left:991px;top:131px" width="20" height="95" viewBox="0 0 20 95">
<circle cx="5" cy="6" r="2.300" fill="none" stroke="#fff" stroke-width="1"/><path d="M3.300 7.700 6.700 4.300" stroke="#fff" stroke-width="1"/>
<path d="M11 6h5" stroke="#fff" stroke-width="1.200" stroke-dasharray="1.200 .8"/>
<path d="M3 17h2.800l1.200-1.800h5.600L13.800 17H16.500v9.500H3z" fill="#fff"/><circle cx="9.800" cy="21.500" r="3" fill="#1c1c1c"/><circle cx="9.800" cy="21.500" r="1.900" fill="#fff"/><circle cx="14.500" cy="18.700" r=".6" fill="#1c1c1c"/>
<path d="M3 36.500h10v9H3z" fill="#fff"/><path d="M13 40 17 37v8L13 42z" fill="#fff"/>
<path d="M3 55h11v1.500H4.500V64H3z" fill="#fff"/><rect x="5.500" y="57.500" width="11" height="8.500" fill="#fff"/>
<g transform="translate(9.800 81.500)"><path d="M-1.300-6.500h2.600l.4 1.700 1.300.7 1.600-.6 1.300 2.200-1.200 1.200v1.500l1.200 1.200-1.300 2.200-1.600-.6-1.300.7-.4 1.700h-2.600l-.4-1.700-1.300-.7-1.600.6-1.300-2.200 1.200-1.200v-1.500l-1.200-1.200 1.300-2.200 1.600.6 1.300-.7z" fill="#fff"/><circle r="2.300" fill="#1c1c1c"/></g>
</svg>
</div>
</body>
</html>
